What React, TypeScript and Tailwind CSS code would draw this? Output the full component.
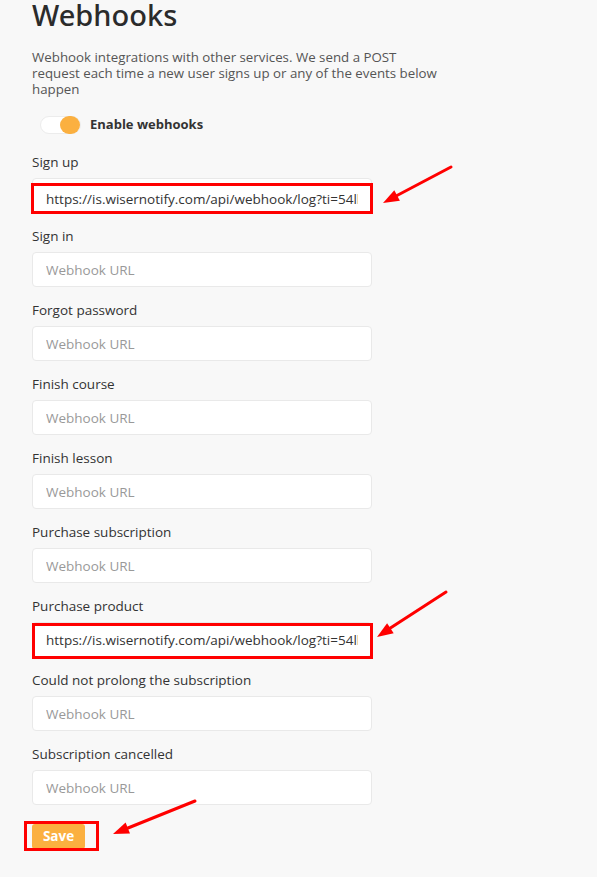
import { useState } from "react";

interface WebhookField {
  key: string;
  label: string;
  value: string;
  highlight?: "signup" | "product";
}

const WISER_URL = "https://is.wisernotify.com/api/webhook/log?ti=54lkd9f2a1bc";

const FIELDS: WebhookField[] = [
  { key: "signUp", label: "Sign up", value: WISER_URL, highlight: "signup" },
  { key: "signIn", label: "Sign in", value: "" },
  { key: "forgotPassword", label: "Forgot password", value: "" },
  { key: "finishCourse", label: "Finish course", value: "" },
  { key: "finishLesson", label: "Finish lesson", value: "" },
  { key: "purchaseSubscription", label: "Purchase subscription", value: "" },
  { key: "purchaseProduct", label: "Purchase product", value: WISER_URL, highlight: "product" },
  { key: "prolongFailed", label: "Could not prolong the subscription", value: "" },
  { key: "subscriptionCancelled", label: "Subscription cancelled", value: "" },
];

const FONT = "font-['Open_Sans',_'Noto_Sans',_sans-serif]";

export default function App() {
  const [enabled, setEnabled] = useState(true);
  const [values, setValues] = useState<Record<string, string>>(() =>
    Object.fromEntries(FIELDS.map((field) => [field.key, field.value]))
  );

  return (
    <div className={`relative min-h-screen overflow-hidden bg-[#f8f8f8] ${FONT} text-[#333]`}>
      <div className="pl-8">
        <h1 className="font-['Noto_Sans',_sans-serif] text-[29px] leading-[30px] font-medium text-[#2b2b2b]">
          Webhooks
        </h1>
        <p className="mt-[19px] w-[410px] text-[13.3px] leading-[16px] text-[#555]">
          Webhook integrations with other services. We send a POST request each time a new user signs up or any of
          the events below happen
        </p>

        <div className="mt-[19px] ml-2 flex items-center gap-[9px] h-[18px]">
          <button
            type="button"
            onClick={() => setEnabled((current) => !current)}
            className={`relative w-[41px] h-[18px] rounded-full bg-white border border-[#ececec] flex items-center ${
              enabled ? "justify-end" : "justify-start"
            }`}
          >
            <span className="w-[20px] h-[18px] rounded-full bg-[#fbb040]" />
          </button>
          <span className="text-[13px] font-bold text-[#333]">Enable webhooks</span>
        </div>

        <div className="mt-[18px] flex flex-col gap-[13px]">
          {FIELDS.map((field) => (
            <div key={field.key} className="flex flex-col gap-[6px]">
              <label className="h-[20px] leading-[20px] text-[13.5px] font-medium text-[#333]">{field.label}</label>
              <div className="relative w-[340px]">
                <input
                  value={values[field.key]}
                  onChange={(event) => setValues((current) => ({ ...current, [field.key]: event.target.value }))}
                  placeholder="Webhook URL"
                  className={`w-full h-[35px] rounded-[4px] border border-[#e9e9e9] bg-white pl-[13px] pr-[13px] text-[13.5px] text-[#333] placeholder:text-[#999] outline-none ${
                    field.highlight === "signup" ? "pt-[7px]" : ""
                  }`}
                />
                {field.highlight === "signup" ? (
                  <div className="absolute left-[-1px] right-[-1px] top-[5px] h-[31px] border-[3px] border-[#ff0000] pointer-events-none" />
                ) : null}
                {field.highlight === "product" ? (
                  <div className="absolute left-0 right-[-1px] top-[1px] h-[36px] border-[3px] border-[#ff0000] pointer-events-none" />
                ) : null}
              </div>
            </div>
          ))}
        </div>

        <div className="mt-[18px] relative w-[53px]">
          <button
            type="button"
            className="w-[53px] h-[25px] rounded-[3px] bg-[#fbb040] text-white text-[13.5px] font-bold"
          >
            Save
          </button>
          <div className="absolute left-[-8px] top-[-2px] w-[75px] h-[30px] border-[3px] border-[#ff0000] pointer-events-none" />
        </div>
      </div>

      {/* annotation arrows */}
      <svg className="absolute inset-0 pointer-events-none" width="597" height="877" viewBox="0 0 597 877">
        <g stroke="#ff0000" strokeWidth="3" strokeLinecap="round" fill="none">
          <line x1="451" y1="167" x2="397" y2="195.5" />
          <line x1="446" y1="592" x2="390" y2="628.3" />
          <line x1="195" y1="801" x2="128" y2="828" />
        </g>
        <g fill="#ff0000">
          <polygon points="383,203 394.3,190.2 399.9,200.8" />
          <polygon points="377,637 387.1,623.3 393.7,633.3" />
          <polygon points="113,834 125.6,822.4 130,833.6" />
        </g>
      </svg>
    </div>
  );
}
